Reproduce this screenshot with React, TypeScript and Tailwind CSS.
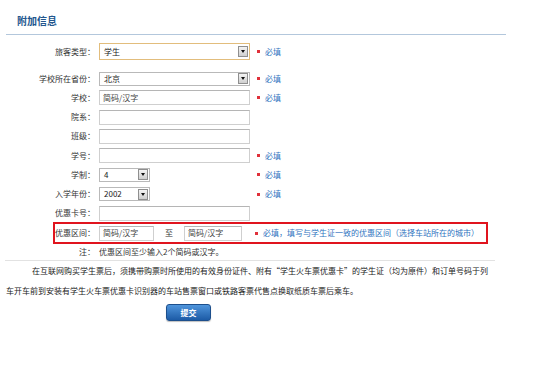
import React from 'react';

const Required = ({ note }: { note?: string }) => (
  <div className="flex items-center ml-[6px] text-[8px]">
    <span className="w-[3px] h-[3px] bg-[#e0303a] mr-[5px] ml-[1px]" />
    <span className="text-[#2f74c0]">必填{note}</span>
  </div>
);

const DropButton = () => (
  <div className="w-[10px] h-[11px] mr-[1px] border border-[#8f8f8f] bg-gradient-to-b from-[#f4f4f4] to-[#cfcfcf] flex items-center justify-center">
    <div className="w-0 h-0 border-l-[2.5px] border-r-[2.5px] border-t-[3px] border-l-transparent border-r-transparent border-t-[#111]" />
  </div>
);

const Select = ({ value, width, focus }: { value: string; width: string; focus?: boolean }) => (
  <div
    className={`${width} flex items-center justify-between bg-white border ${
      focus ? 'h-[17px] border-[#e2bd7c]' : 'h-[14px] border-[#b9b9b9]'
    }`}
  >
    <span className="pl-[4px] text-[#222]">{value}</span>
    <DropButton />
  </div>
);

const Input = ({ value, width = 'w-[151px]' }: { value?: string; width?: string }) => (
  <div className={`${width} h-[15px] flex items-center bg-white border border-[#cfcfcf] border-t-[#b5b5b5]`}>
    {value && <span className="pl-[3px] text-[#444]">{value}</span>}
  </div>
);

const Row = ({ label, children, required }: { label: string; children: React.ReactNode; required?: boolean }) => (
  <div className="flex items-center h-[19.25px]">
    <div className="w-[95px] text-right text-[#333]">{label}</div>
    <div className="ml-[4px] w-[151px] flex">{children}</div>
    {required && <Required />}
  </div>
);

export default function App() {
  return (
    <div className="w-[537px] h-[370px] bg-white overflow-hidden font-['Noto_Sans_CJK_SC','Noto_Sans',sans-serif] text-[8px] leading-none text-[#333]">
      {/* header */}
      <div className="h-[34px] pl-[17px] pt-[16px]">
        <h2 className="text-[10px] font-bold text-[#23578e]">附加信息</h2>
      </div>
      <div className="ml-[6px] w-[500px] border-t border-[#b3c7dc]" />

      {/* form */}
      <div className="mt-[8px] flex items-center h-[17px]">
        <div className="w-[95px] text-right">旅客类型：</div>
        <div className="ml-[4px]">
          <Select value="学生" width="w-[151px]" focus />
        </div>
        <Required />
      </div>

      <div className="mt-[9px]">
        <Row label="学校所在省份：" required>
          <Select value="北京" width="w-[151px]" />
        </Row>
        <Row label="学校：" required>
          <Input value="简码/汉字" />
        </Row>
        <Row label="院系：">
          <Input />
        </Row>
        <Row label="班级：">
          <Input />
        </Row>
        <Row label="学号：" required>
          <Input />
        </Row>
        <Row label="学制：" required>
          <Select value="4" width="w-[51px]" />
        </Row>
        <Row label="入学年份：" required>
          <Select value="2002" width="w-[51px]" />
        </Row>
        <Row label="优惠卡号：">
          <Input />
        </Row>
      </div>

      {/* discount range, highlighted */}
      <div className="-mt-[1px] ml-[53px] w-[435px] h-[22px] border-2 border-[#e0141e] flex items-center">
        <div className="w-[40px] text-right">优惠区间：</div>
        <div className="ml-[4px] flex items-center">
          <Input value="简码/汉字" width="w-[55px]" />
          <span className="w-[30px] text-center">至</span>
          <Input value="简码/汉字" width="w-[58px]" />
        </div>
        <div className="ml-[6px]">
          <Required note="，填写与学生证一致的优惠区间（选择车站所在的城市）" />
        </div>
      </div>

      <div className="flex items-center h-[16px]">
        <div className="w-[95px] text-right">注：</div>
        <div className="ml-[4px]">优惠区间至少输入2个简码或汉字。</div>
      </div>

      <div className="ml-[5px] w-[490px] border-t border-[#e2e2e2]" />

      <p className="ml-[6px] w-[495px] leading-[20px] indent-[26px] text-[#222]">
        在互联网购买学生票后，须携带购票时所使用的有效身份证件、附有“学生火车票优惠卡”的学生证（均为原件）和订单号码于列
        <br />
        车开车前到安装有学生火车票优惠卡识别器的车站售票窗口或铁路客票代售点换取纸质车票后乘车。
      </p>

      <div className="mt-[3px] ml-[166px]">
        <button className="w-[45px] h-[17px] rounded-[3px] border border-[#1d4f8c] bg-gradient-to-b from-[#4f95dc] to-[#1c5ba6] text-white font-bold text-[8px] flex items-center justify-center shadow-[0_1px_1px_rgba(0,0,0,0.25)]">
          提交
        </button>
      </div>
    </div>
  );
}
